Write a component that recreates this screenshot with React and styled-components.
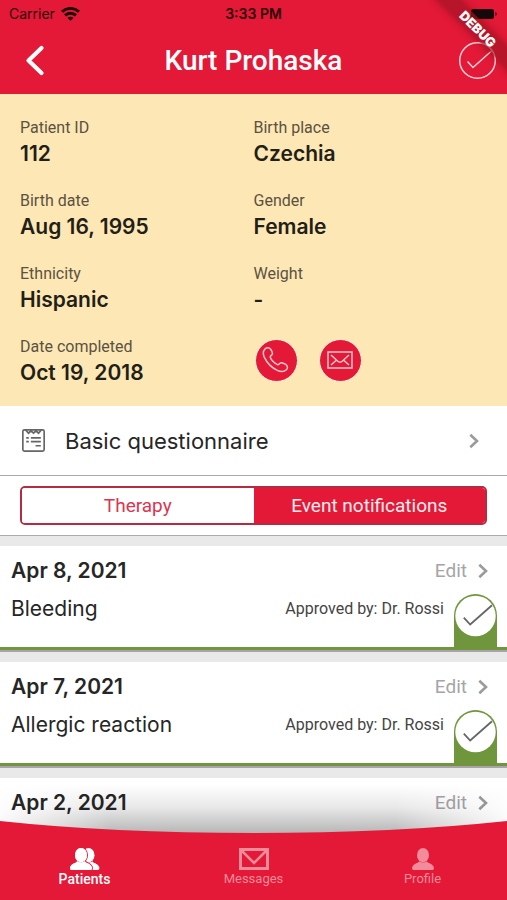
import React, { useState } from "react";
import styled, { createGlobalStyle } from "styled-components";

const red = "#e31937";
const green = "#6f963c";
const ui = 'Roboto, "Open Sans", sans-serif';
const round = 'Inter, "Open Sans", sans-serif';

const GlobalStyle = createGlobalStyle`
  *, *::before, *::after { box-sizing: border-box; }
  body { margin: 0; background: #e9e9e9; }
  button { font: inherit; color: inherit; border: 0; padding: 0; background: none; cursor: pointer; }
  h1, h2, p, dl, dt, dd { margin: 0; }
  svg { display: block; }
`;

const Screen = styled.div`
  position: relative;
  display: flex;
  flex-direction: column;
  height: 100vh;
  overflow: hidden;
  font-family: ${ui};
  color: #262626;
  background: #e9e9e9;
`;

const Header = styled.header`
  flex: none;
  background: ${red};
`;

const StatusBar = styled.div`
  display: grid;
  grid-template-columns: 1fr auto 1fr;
  align-items: center;
  height: 27px;
  padding: 0 9px;
  font-family: Inter, sans-serif;
  font-size: 14px;
  color: #2b0409;
`;

const Carrier = styled.div`
  display: flex;
  align-items: center;
  gap: 6px;
`;

const Clock = styled.time`
  font-weight: 600;
`;

const Battery = styled.svg`
  justify-self: end;
`;

const TitleBar = styled.div`
  display: grid;
  grid-template-columns: 40px 1fr 40px;
  align-items: center;
  height: 67px;
  padding: 0 10px;
`;

const Title = styled.h1`
  text-align: center;
  color: #fff;
  font-size: 28px;
  font-weight: 500;
  line-height: 40px;
`;

const RibbonCorner = styled.div`
  position: absolute;
  top: 0;
  right: 0;
  width: 80px;
  height: 80px;
  overflow: hidden;
  pointer-events: none;
`;

const Ribbon = styled.div`
  position: absolute;
  top: 21px;
  right: -41px;
  width: 140px;
  height: 16px;
  transform: rotate(45deg);
  background: rgba(160, 20, 35, 0.65);
  box-shadow: 0 0 8px rgba(60, 0, 0, 0.4);
  color: #fff;
  font: 900 13px/16px Inter, sans-serif;
  text-align: center;
`;

const Main = styled.main`
  flex: 1;
  min-height: 0;
  overflow-y: auto;
  scrollbar-width: none;
`;

const Info = styled.dl`
  display: grid;
  grid-template-columns: 1fr 1fr;
  row-gap: 21px;
  padding: 23px 20px 18px;
  background: #fde8b5;
`;

const Label = styled.dt`
  font-size: 16px;
  line-height: 22px;
  color: #5b5141;
`;

const Value = styled.dd`
  font: 600 21px/30px ${round};
  color: #231e18;
`;

const Contacts = styled.div`
  display: flex;
  align-items: center;
  gap: 21px;
  padding: 0 0 4px 1px;
`;

const RoundButton = styled.button`
  display: grid;
  place-items: center;
  width: 43px;
  height: 43px;
  border: 1px solid #fff6e2;
  border-radius: 50%;
  background: ${red};
`;

const Questionnaire = styled.button`
  display: flex;
  align-items: center;
  width: 100%;
  height: 70px;
  padding: 0 28px 0 22px;
  border-bottom: 1px solid #aaa;
  background: #fff;
  font: 400 22px/30px ${round};
  text-align: left;
`;

const QuestionnaireName = styled.span`
  flex: 1;
  padding-left: 20px;
`;

const Switcher = styled.div`
  padding: 10px 20px;
  border-bottom: 1px solid #aaa;
  background: #fff;
`;

const Segments = styled.div`
  display: grid;
  grid-template-columns: 1fr 1fr;
  height: 39px;
  border: 2px solid #b52b42;
  border-radius: 5px;
  overflow: hidden;
`;

const Segment = styled.button`
  && {
    background: ${(p) => (p.$active ? red : "#fff")};
    color: ${(p) => (p.$active ? "#ffeef0" : "#dc3550")};
    font-size: 19px;
    line-height: 24px;
  }
`;

const Events = styled.div`
  display: flex;
  flex-direction: column;
  gap: 10px;
  padding-top: 10px;
`;

const Card = styled.article`
  flex: none;
  min-height: 104px;
  padding: 10px 10px 0 11px;
  border-bottom: 3px solid ${green};
  box-shadow: 0 2px 0 #aaa4aa;
  background: #fff;
  margin-bottom: 2px;
`;

const CardRow = styled.div`
  display: flex;
  align-items: flex-start;
  justify-content: space-between;
`;

const EventDate = styled.h2`
  font: 600 21px/30px ${round};
`;

const EditButton = styled.button`
  && {
    display: flex;
    align-items: center;
    gap: 11px;
    padding-right: 9px;
    font-size: 19px;
    line-height: 30px;
    color: #a5a5a5;
  }
`;

const CardBody = styled(CardRow)`
  padding-top: 8px;
`;

const EventName = styled.p`
  flex: 1;
  font: 400 21px/30px ${round};
`;

const Approval = styled.p`
  padding-right: 10px;
  font-size: 16px;
  line-height: 29px;
  color: #444;
`;

const Badge = styled.div`
  width: 43px;
  height: 53px;
  padding: 1px;
  border-radius: 22px 22px 0 0;
  background: ${green};
`;

const NavWrap = styled.div`
  position: relative;
  flex: none;
  margin-top: -12px;
`;

const NavShade = styled.div`
  position: absolute;
  left: 0;
  right: 0;
  top: -36px;
  height: 50px;
  pointer-events: none;
  background: linear-gradient(rgba(0, 0, 0, 0), rgba(0, 0, 0, 0.09) 45%, rgba(0, 0, 0, 0.3));
  mask-image: linear-gradient(90deg, rgba(0, 0, 0, 0.1), #000 22%, #000 78%, rgba(0, 0, 0, 0.1));
`;

const Curve = styled.svg`
  position: relative;
  width: 100%;
  height: 13px;
`;

const Nav = styled.nav`
  position: relative;
  display: grid;
  grid-template-columns: repeat(3, 1fr);
  height: 66px;
  padding-top: 14px;
  background: ${red};
`;

const Tab = styled.a`
  display: flex;
  flex-direction: column;
  align-items: center;
  color: ${(p) => (p.$active ? "#fff" : "#f28b9a")};
  font-size: ${(p) => (p.$active ? "14px" : "13px")};
  font-weight: ${(p) => (p.$active ? 500 : 400)};
  line-height: 18px;
  text-decoration: none;
`;

const Chevron = () => (
  <svg width="10" height="16" viewBox="0 0 10 16" fill="none" stroke="#9b9b9b" strokeWidth="2.6" aria-hidden="true">
    <path d="M1.3 1.7 8 8l-6.7 6.3" />
  </svg>
);

const WifiIcon = () => (
  <svg width="19" height="14" viewBox="0 0 19 14" fill="none" stroke="#1a0205" strokeWidth="2.9" aria-hidden="true">
    <path d="M1 4.8a12.3 12.3 0 0 1 17 0M4.1 8.4a7.7 7.7 0 0 1 10.8 0" />
    <path d="M9.5 13.8 6.5 10.9a4.2 4.2 0 0 1 6 0Z" fill="#1a0205" stroke="none" />
  </svg>
);

const BackIcon = () => (
  <svg width="40" height="32" viewBox="0 0 40 32" fill="none" stroke="#fff" strokeWidth="4.2" strokeLinecap="round" strokeLinejoin="round">
    <path d="M31.5 3 18.5 15.5l13 12.5" />
  </svg>
);

const DoneIcon = () => (
  <svg width="40" height="38" viewBox="0 0 40 38" fill="none" stroke="#fbd3d9" strokeWidth="1.5">
    <circle cx="20.5" cy="18.5" r="17.8" />
    <path d="m10.5 19.5 5.5 6L35 8.5" />
  </svg>
);

const ApprovedIcon = () => (
  <svg width="41" height="42" viewBox="0 0 41 42" role="img" aria-label="Approved">
    <circle cx="20.5" cy="21" r="20.2" fill="#fff" />
    <path d="m8.8 22.6 6.4 6.9L37 10.3" fill="none" stroke="#666" strokeWidth="1.8" />
  </svg>
);

const PhoneIcon = () => (
  <svg width="28" height="28" viewBox="0 0 30 30" fill="none" stroke="#fbc6ce" strokeWidth="1.6" strokeLinejoin="round">
    <path d="M3.2 3.2c1.800-1.800 4.600-1.700 6.100.3 1.200 1.700 2.800 4 1.400 5.800-.7.9-2.200 1.500-1.800 2.700.8 2.900 4.800 7 7.700 8 1.300.3 1.900-1.100 2.800-1.700 1.700-1.200 4 .1 6 1.400 2.200 1.500 2.400 4.200.7 5.700-2.600 2.400-6.500 2.200-9.700.7C10.500 23.300 5.200 17.800 2.400 11.900 1.200 9.100.9 5.500 3.200 3.200Z" />
  </svg>
);

const MailIcon = () => (
  <svg width="26" height="18" viewBox="0 0 26 18" fill="none" stroke="#fbc6ce" strokeWidth="1.5">
    <path d="M1 1h24v16H1ZM4 4l6.5 6c1.5 1.4 3.5 1.4 5 0L22 4M4 14l5-4.5M22 14l-5-4.5" />
  </svg>
);

const FormIcon = () => (
  <svg width="23" height="23" viewBox="0 0 22 22" fill="none" stroke="#666" strokeWidth="1.6" aria-hidden="true">
    <rect x=".8" y=".8" width="20.4" height="20.4" rx="1.5" />
    <path d="M3.5 1 6.2 4l2.400-2.300L11 4l2.400-2.300L15.800 4l2.700-3" />
    <path d="M4 8.500h2.500M8.500 8.500H18M4 12h2.500M8.500 12H18M13 16h5" />
  </svg>
);

const Figure = (props) => (
  <g {...props}>
    <ellipse cx="11" cy="7.2" rx="6" ry="7.2" />
    <path d="M7 13.300c2.400 1.700 5.600 1.700 8 0 .4 1.900 5 2 6.500 5.200.8 1.800.4 3.500-1.300 3.500H1.800C.1 22-.3 20.300.5 18.500 2 15.300 6.600 15.200 7 13.300Z" />
  </g>
);

const PatientsIcon = () => (
  <svg width="30" height="22" viewBox="0 0 30 22" fill="currentColor" aria-hidden="true">
    <Figure transform="translate(7.5 0)" />
    <Figure stroke={red} strokeWidth="2" paintOrder="stroke" />
    <Figure />
  </svg>
);

const MessagesIcon = () => (
  <svg width="30" height="22" viewBox="0 0 30 22" fill="none" stroke="currentColor" strokeWidth="3" aria-hidden="true">
    <path d="M1.5 1.5h27v19h-27Z" />
    <path d="m3 3 12 12L27 3" strokeWidth="2.5" />
  </svg>
);

const ProfileIcon = () => (
  <svg width="22" height="22" viewBox="0 0 22 22" fill="currentColor" aria-hidden="true">
    <Figure />
  </svg>
);

const details = [
  ["Patient ID", "112"],
  ["Birth place", "Czechia"],
  ["Birth date", "Aug 16, 1995"],
  ["Gender", "Female"],
  ["Ethnicity", "Hispanic"],
  ["Weight", "-"],
  ["Date completed", "Oct 19, 2018"],
];

const events = [
  { date: "Apr 8, 2021", name: "Bleeding", by: "Dr. Rossi" },
  { date: "Apr 7, 2021", name: "Allergic reaction", by: "Dr. Rossi" },
  { date: "Apr 2, 2021" },
];

const tabs = [
  ["Patients", PatientsIcon],
  ["Messages", MessagesIcon],
  ["Profile", ProfileIcon],
];

export default function App() {
  const [segment, setSegment] = useState("Event notifications");
  return (
    <>
      <GlobalStyle />
      <Screen>
        <Header>
          <StatusBar>
            <Carrier>Carrier <WifiIcon /></Carrier>
            <Clock>3:33 PM</Clock>
            <Battery width="28" height="12" viewBox="0 0 28 12" fill="#16090b" aria-hidden="true">
              <rect x="1" y="1" width="23" height="10" rx="2" />
              <path d="M25.5 4v4c1.6-.6 1.6-3.400 0-4Z" />
            </Battery>
          </StatusBar>
          <TitleBar>
            <button aria-label="Back"><BackIcon /></button>
            <Title>Kurt Prohaska</Title>
            <button aria-label="Mark as done"><DoneIcon /></button>
          </TitleBar>
        </Header>
        <Main>
          <Info>
            {details.map(([label, value]) => (
              <div key={label}>
                <Label>{label}</Label>
                <Value>{value}</Value>
              </div>
            ))}
            <Contacts>
              <RoundButton aria-label="Call"><PhoneIcon /></RoundButton>
              <RoundButton aria-label="Send email"><MailIcon /></RoundButton>
            </Contacts>
          </Info>
          <Questionnaire>
            <FormIcon />
            <QuestionnaireName>Basic questionnaire</QuestionnaireName>
            <Chevron />
          </Questionnaire>
          <Switcher>
            <Segments>
              {["Therapy", "Event notifications"].map((name) => (
                <Segment key={name} $active={segment === name} aria-pressed={segment === name} onClick={() => setSegment(name)}>
                  {name}
                </Segment>
              ))}
            </Segments>
          </Switcher>
          <Events>
            {events.map((event) => (
              <Card key={event.date}>
                <CardRow>
                  <EventDate>{event.date}</EventDate>
                  <EditButton>Edit <Chevron /></EditButton>
                </CardRow>
                {event.name && (
                  <CardBody>
                    <EventName>{event.name}</EventName>
                    <Approval>Approved by: {event.by}</Approval>
                    <Badge><ApprovedIcon /></Badge>
                  </CardBody>
                )}
              </Card>
            ))}
          </Events>
        </Main>
        <NavWrap>
          <NavShade />
          <Curve viewBox="0 0 100 13" preserveAspectRatio="none" aria-hidden="true">
            <path d="M0 0Q22 12 50 12T100 0V13H0Z" fill={red} />
          </Curve>
          <Nav>
            {tabs.map(([name, Icon], i) => (
              <Tab key={name} href={"#" + name.toLowerCase()} $active={i === 0}>
                <Icon />
                {name}
              </Tab>
            ))}
          </Nav>
        </NavWrap>
        <RibbonCorner><Ribbon>DEBUG</Ribbon></RibbonCorner>
      </Screen>
    </>
  );
}
